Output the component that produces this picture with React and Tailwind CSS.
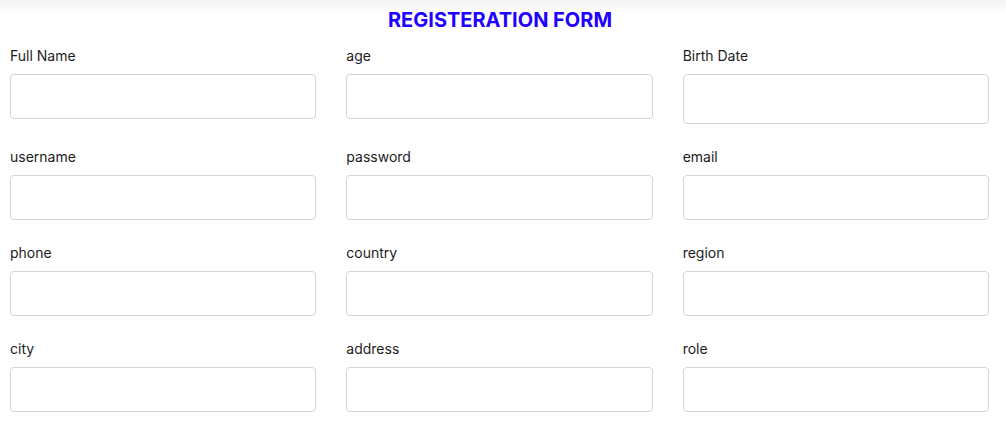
import React from 'react';

const fields = [
  { label: 'Full Name' },
  { label: 'age' },
  { label: 'Birth Date', tall: true },
  { label: 'username' },
  { label: 'password' },
  { label: 'email' },
  { label: 'phone' },
  { label: 'country' },
  { label: 'region' },
  { label: 'city' },
  { label: 'address' },
  { label: 'role' },
];

export default function App() {
  return (
    <div
      className="min-h-[435px] bg-[linear-gradient(to_bottom,#f3f3f3,#ffffff_14px)] pt-[6px]"
      style={{ fontFamily: 'Inter, "Noto Sans", sans-serif' }}
    >
      <h1 className="text-center text-[20px] leading-[28px] font-bold text-[#2200ff] pr-[6px]">
        REGISTERATION FORM
      </h1>

      {/* form grid */}
      <div className="ml-[10px] w-[979px] mt-[12px] grid grid-cols-3 gap-x-[30px] gap-y-[23px] items-start">
        {fields.map((f) => (
          <div key={f.label} className="flex flex-col">
            <label className="text-[14px] leading-[20px] text-[#1c1c1c] mb-[8px]">{f.label}</label>
            <input
              type="text"
              className={`w-full ${f.tall ? 'h-[50px]' : 'h-[45px]'} border border-[#d4d4d4] rounded-[4px] bg-white outline-none`}
            />
          </div>
        ))}
      </div>
    </div>
  );
}
